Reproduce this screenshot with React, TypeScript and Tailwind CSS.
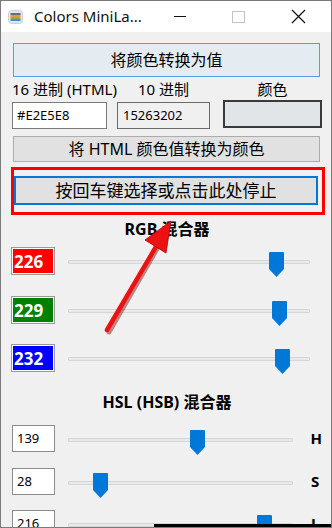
import React from 'react'

const FONT = "font-['Noto_Sans','Noto_Sans_CJK_SC',sans-serif]"

const rgbRows = [
  { value: 226, fill: 'bg-[#ff0000]', gap: 'mt-[7px]' },
  { value: 229, fill: 'bg-[#008000]', gap: 'mt-[21px]' },
  { value: 232, fill: 'bg-[#0000ff]', gap: 'mt-[20px]' },
]

const hslRows = [
  { value: 139, letter: 'H', gap: 'mt-[12px]' },
  { value: 28, letter: 'S', gap: 'mt-[16px]' },
  { value: 216, letter: 'L', gap: 'mt-[15px]' },
]

function Thumb() {
  return (
    <svg width="15" height="25" viewBox="0 0 15 25">
      <path d="M1 0H14a1 1 0 0 1 1 1V17L7.5 25L0 17V1a1 1 0 0 1 1-1Z" fill="#0078d7" />
    </svg>
  )
}

function Slider({ value, max, width }: { value: number; max: number; width: number }) {
  const left = Math.round((value / max) * (width - 15))
  return (
    <div className="relative h-[27px] pt-[13px]" style={{ width }}>
      <div className="h-[4px] w-full rounded-[1px] border border-[#d6d6d6] bg-[#e7eaea]" />
      <div className="absolute top-[5px]" style={{ left }}>
        <Thumb />
      </div>
    </div>
  )
}

function TitleBar() {
  return (
    <div className="flex h-[31px] items-center bg-white">
      <svg className="ml-[7px]" width="15" height="14" viewBox="0 0 15 14">
        <rect x="0.5" y="0.5" width="14" height="13" rx="3" fill="#e6e6e6" stroke="#cfcfcf" />
        <rect x="2.5" y="3" width="10" height="2" fill="#5b7088" />
        <rect x="2.5" y="5" width="10" height="2" fill="#e89a3c" />
        <rect x="2.5" y="7" width="10" height="2" fill="#8db356" />
        <rect x="2.5" y="9" width="10" height="2" fill="#4a8ccc" />
      </svg>
      <span className="ml-[11px] text-[15px] leading-none text-[#111]">Colors MiniLa...</span>
      <div className="ml-[32px] h-px w-[12px] bg-[#111]" />
      <div className="ml-[46px] h-[12px] w-[13px] border border-[#c4c4c4]" />
      <svg className="ml-[46px]" width="15" height="15" viewBox="0 0 15 15">
        <path d="M1 1L14 14M14 1L1 14" stroke="#111" strokeWidth="1.2" />
      </svg>
    </div>
  )
}

export default function App() {
  return (
    <div className={`relative h-[528px] w-[332px] overflow-hidden border border-[#7a7a7a] bg-[#f0f0f0] ${FONT}`}>
      <TitleBar />

      <div className="w-[321px] pl-[11px] pt-[11px] text-black">
        <button className="ml-[1px] flex h-[34px] w-[307px] items-center justify-center border border-[#5a9fdc] bg-[#e4ebf1] text-[16px]">
          将颜色转换为值
        </button>

        <div className="mt-[1px] flex items-start">
          <div className="flex w-[95px] flex-col">
            <span className="whitespace-nowrap text-[15px] leading-[22px]">16 进制 (HTML)</span>
            <div className="mt-[2px] flex h-[27px] items-center border border-[#7a7a7a] bg-white pl-[4px] text-[13px]">
              #E2E5E8
            </div>
          </div>
          <div className="ml-[10px] flex w-[93px] flex-col">
            <span className="text-center text-[15px] leading-[22px]">10 进制</span>
            <div className="mt-[2px] flex h-[27px] items-center border border-[#6b6b6b] bg-[#f0f0f0] pl-[5px] text-[13px]">
              15263202
            </div>
          </div>
          <div className="ml-[13px] flex w-[99px] flex-col">
            <span className="text-center text-[15px] leading-[22px]">颜色</span>
            <div className="h-[28px] border-2 border-[#3a3a3a] bg-[#e2e5e8]" />
          </div>
        </div>

        <button className="ml-[1px] mt-[7px] flex h-[26px] w-[307px] items-center justify-center border border-[#adadad] bg-[#e1e1e1] text-[16px]">
          将 HTML 颜色值转换为颜色
        </button>

        <button className="ml-[2px] mt-[14px] flex h-[29px] w-[304px] items-center justify-center border-2 border-[#0078d7] bg-[#e1e1e1] text-[17px]">
          按回车键选择或点击此处停止
        </button>

        <div className="mt-[13px] text-center text-[16px] font-bold leading-[22px]">RGB 混合器</div>

        {rgbRows.map((r) => (
          <div key={r.value} className={`${r.gap} flex items-start`}>
            <div className="-ml-[1px] h-[28px] w-[44px] border border-[#9a9a9a] bg-white p-[1px]">
              <div className={`${r.fill} flex h-full items-center pl-[1px] text-[17px] font-bold leading-none text-white`}>
                {r.value}
              </div>
            </div>
            <div className="ml-[13px]">
              <Slider value={r.value} max={255} width={242} />
            </div>
          </div>
        ))}

        <div className="mt-[19px] text-center text-[16px] font-bold leading-[22px]">HSL (HSB) 混合器</div>

        {hslRows.map((r) => (
          <div key={r.letter} className={`${r.gap} flex items-start`}>
            <div className="flex h-[27px] w-[43px] items-center border border-[#8c8c8c] bg-white pl-[4px] text-[13px]">
              {r.value}
            </div>
            <div className="ml-[13px]">
              <Slider value={r.value} max={240} width={225} />
            </div>
            <span className="ml-[18px] mt-[3px] text-[15px] font-bold leading-[20px]">{r.letter}</span>
          </div>
        ))}
      </div>

      {/* annotation overlays */}
      <div className="pointer-events-none absolute left-[10px] top-[166px] h-[48px] w-[314px] border-[3px] border-[#ff0000]" />
      <svg className="pointer-events-none absolute -left-[1px] -top-[1px]" width="332" height="528" viewBox="0 0 332 528">
        <line x1="109" y1="332" x2="158" y2="247" stroke="#7a0000" strokeOpacity="0.45" strokeWidth="5" strokeLinecap="round" />
        <line x1="107" y1="330" x2="157" y2="245" stroke="#ee1111" strokeWidth="4.5" strokeLinecap="round" />
        <polygon points="171,221 145,240 166,253" fill="#ee1111" stroke="#b00000" strokeWidth="0.8" strokeLinejoin="round" />
      </svg>
      <div className="absolute left-[153px] top-[523px] h-[6px] w-[180px] bg-black" />
    </div>
  )
}
